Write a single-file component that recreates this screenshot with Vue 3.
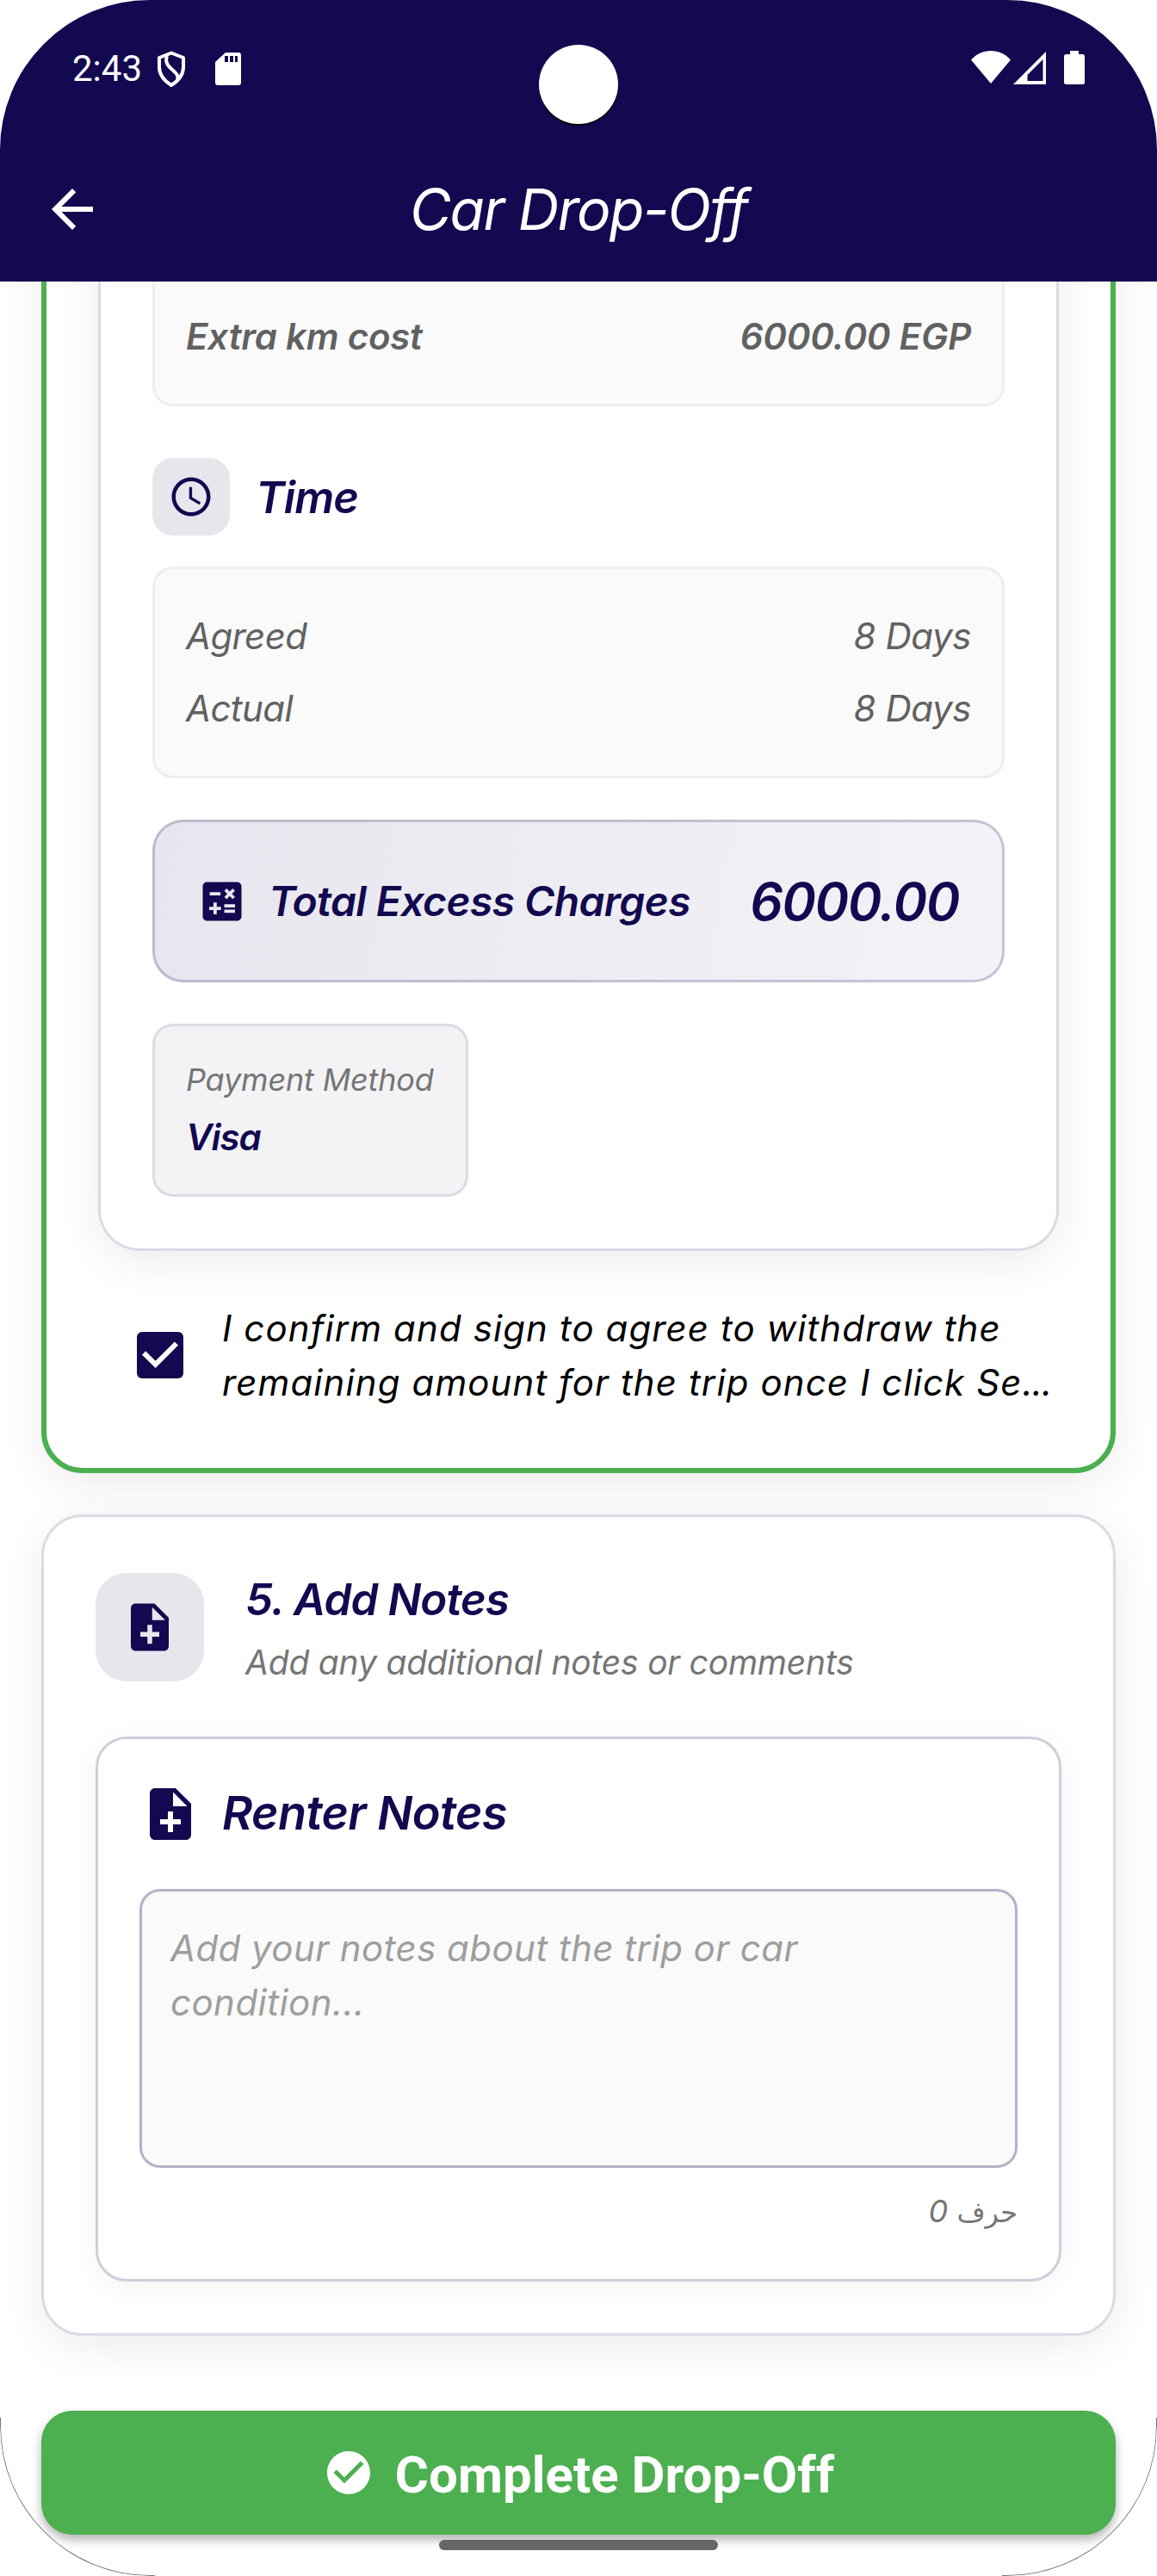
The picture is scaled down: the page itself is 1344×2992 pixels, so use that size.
<script setup>
const timeRows = [
  { label: 'Agreed', value: '8 Days' },
  { label: 'Actual', value: '8 Days' },
]
</script>

<template>
  <div class="stage">
    <div class="phone">
      <header class="header">
        <div class="status">
          <span class="clock">2:43</span>
          <svg class="shield" viewBox="0 0 34 42" width="34" height="42">
            <path d="M17 2.500 31 8v11c0 9-6 16-14 21C9 35 3 28 3 19V8z" fill="none" stroke="#fff" stroke-width="4" stroke-linejoin="round" />
            <path d="M12 6c-2 5-1 9 3 13 6 6 11 8 9 15" fill="none" stroke="#fff" stroke-width="4" />
          </svg>
          <svg class="sd" viewBox="0 0 30 38" width="30" height="38">
            <path fill="#fff" fill-rule="evenodd" d="M12 0h15a3 3 0 0 1 3 3v32a3 3 0 0 1-3 3H3a3 3 0 0 1-3-3V11zM11 4v7h4V4zm6 0v7h4V4zm6 0v7h3V4z" />
          </svg>
          <span class="grow"></span>
          <svg class="wifi" viewBox="0 0 46 38" width="46" height="38">
            <path fill="#fff" d="M0 10.500C6 4 14 0 23 0s17 4 23 10.500L23 38z" />
          </svg>
          <svg class="signal" viewBox="0 0 38 38" width="38" height="38">
            <path fill="#fff" fill-rule="evenodd" d="M38 0v38H0zM34.500 9 16.500 27v7h18z" />
          </svg>
          <svg class="battery" viewBox="0 0 24 39" width="24" height="39">
            <path fill="#fff" d="M7 0h10v4h4.500a2.500 2.500 0 0 1 2.500 2.500v30a2.500 2.500 0 0 1-2.500 2.500h-19A2.500 2.500 0 0 1 0 36.500v-30A2.500 2.500 0 0 1 2.500 4H7z" />
          </svg>
        </div>
        <div class="camera"></div>
        <div class="appbar">
          <svg class="back" viewBox="0 0 24 24" width="72" height="72">
            <path fill="#fff" d="M20 11H7.830l5.590-5.590L12 4l-8 8 8 8 1.410-1.410L7.830 13H20v-2z" />
          </svg>
          <h1>Car Drop-Off</h1>
        </div>
      </header>

      <main class="content">
        <section class="card active">
          <div class="invoice">
            <div class="box clipped">
              <div class="row strong"><span>Extra km cost</span><span>6000.00 EGP</span></div>
            </div>

            <div class="section-head">
              <div class="chip">
                <svg viewBox="0 0 24 24" width="54" height="54">
                  <path fill="#120950" d="M11.990 2C6.470 2 2 6.480 2 12s4.470 10 9.990 10C17.520 22 22 17.520 22 12S17.520 2 11.990 2zM12 20c-4.420 0-8-3.580-8-8s3.580-8 8-8 8 3.580 8 8-3.580 8-8 8zm.5-13H11v6l5.250 3.150.75-1.230-4.500-2.670z" />
                </svg>
              </div>
              <h2>Time</h2>
            </div>

            <div class="box">
              <div v-for="r in timeRows" :key="r.label" class="row">
                <span>{{ r.label }}</span><span class="value">{{ r.value }}</span>
              </div>
            </div>

            <div class="total">
              <svg viewBox="0 0 24 24" width="60" height="60">
                <path fill="#120950" d="M19 3H5c-1.100 0-2 .9-2 2v14c0 1.100.9 2 2 2h14c1.100 0 2-.9 2-2V5c0-1.100-.9-2-2-2zm-5.970 4.060L14.090 6l1.410 1.410L16.910 6l1.060 1.060-1.410 1.410 1.410 1.410-1.060 1.060-1.410-1.400-1.410 1.410-1.060-1.060 1.410-1.410-1.410-1.420zm-6.780.66h5v1.500h-5v-1.500zM11.500 16h-2v2H8v-2H6v-1.500h2v-2h1.500v2h2V16zm6.500 1.250h-5v-1.500h5v1.500zm0-2.500h-5v-1.500h5v1.500z" />
              </svg>
              <span class="total-label">Total Excess Charges</span>
              <span class="total-value">6000.00</span>
            </div>

            <div class="payment">
              <div class="pay-label">Payment Method</div>
              <div class="pay-value">Visa</div>
            </div>
          </div>

          <label class="confirm">
            <svg viewBox="0 0 54 54" width="54" height="54">
              <rect width="54" height="54" rx="6" fill="#120950" />
              <path d="M8.100 24.300 21.600 37.800 45.900 13.500" fill="none" stroke="#fff" stroke-width="6" />
            </svg>
            <p>I confirm and sign to agree to withdraw the<br>remaining amount for the trip once I click Se<span class="dots">...</span></p>
          </label>
        </section>

        <section class="card notes">
          <div class="notes-head">
            <div class="badge">
              <svg viewBox="0 0 24 24" width="66" height="66">
                <path fill="#120950" d="M14 2H6c-1.100 0-1.990.9-1.990 2L4 20c0 1.100.89 2 1.990 2H18c1.100 0 2-.9 2-2V8l-6-6zm2 14h-3v3h-2v-3H8v-2h3v-3h2v3h3v2zm-3-7V3.500L18.500 9H13z" />
              </svg>
            </div>
            <div>
              <h2 class="notes-title">5. Add Notes</h2>
              <p class="notes-sub">Add any additional notes or comments</p>
            </div>
          </div>

          <div class="renter">
            <div class="renter-head">
              <svg viewBox="0 0 24 24" width="72" height="72">
                <path fill="#120950" d="M14 2H6c-1.100 0-1.990.9-1.990 2L4 20c0 1.100.89 2 1.990 2H18c1.100 0 2-.9 2-2V8l-6-6zm2 14h-3v3h-2v-3H8v-2h3v-3h2v3h3v2zm-3-7V3.500L18.500 9H13z" />
              </svg>
              <h3>Renter Notes</h3>
            </div>
            <div class="field">Add your notes about the trip or car<br>condition...</div>
            <div class="counter">0 <span class="ar" dir="rtl">حرف</span></div>
          </div>
        </section>

        <button class="submit" type="button">
          <svg viewBox="0 0 24 24" width="60" height="60">
            <path fill="#fff" d="M12 2C6.480 2 2 6.480 2 12s4.480 10 10 10 10-4.480 10-10S17.520 2 12 2zm-2 15-5-5 1.410-1.410L10 14.170l7.590-7.590L19 8l-9 9z" />
          </svg>
          <span>Complete Drop-Off</span>
        </button>
      </main>
      <div class="home-bar"></div>
    </div>
  </div>
</template>

<style>
body { margin: 0; background: #fff; }
</style>

<style scoped>
.stage { width: 1344px; height: 2992px; background: #fff; }
.phone {
  position: relative;
  box-sizing: border-box;
  width: 1344px;
  height: 2992px;
  overflow: hidden;
  border-radius: 174px;
  background: #fff;
  font-family: Inter, "Liberation Sans", sans-serif;
  font-style: italic;
  color: #120950;
}
.phone::after {
  content: "";
  position: absolute;
  left: 0;
  right: 0;
  bottom: 0;
  height: 184px;
  border: 1px solid #777;
  border-top: 0;
  border-radius: 0 0 174px 174px;
  box-sizing: border-box;
  clip-path: polygon(0 0, 180px 0, 180px 100%, 1164px 100%, 1164px 0, 100% 0, 100% 100%, 0 100%);
}
h1, h2, h3, p { margin: 0; }
svg { display: block; flex: none; }

.header {
  position: relative;
  z-index: 2;
  height: 327px;
  background: #120950;
  color: #fff;
}
.status {
  display: flex;
  box-sizing: border-box;
  height: 159px;
  padding: 59px 84px 0 84px;
}
.clock {
  width: 98px;
  font: normal 400 42px/50px Roboto, sans-serif;
  margin-top: -4px;
}
.sd { margin: 2px 0 0 34px; }
.grow { flex: 1; }
.wifi { margin-right: 3px; }
.signal { margin: 1px 21px 0 0; }
.camera {
  position: absolute;
  left: 626px;
  top: 52px;
  width: 92px;
  height: 92px;
  border-radius: 50%;
  background: #fff;
  box-shadow: 0 2px 0 #000;
}
.appbar {
  position: relative;
  display: flex;
  align-items: center;
  height: 168px;
  padding-left: 48px;
}
h1 {
  position: absolute;
  left: 0;
  right: 0;
  text-align: center;
  font-size: 66px;
  font-weight: 400;
  line-height: 168px;
  letter-spacing: -1.6px;
}

.content { margin-top: -160px; padding: 0 48px; }
.card {
  box-sizing: border-box;
  border: 3px solid #dbdae5;
  border-radius: 48px;
  background: #fff;
  box-shadow: 0 12px 52px rgba(0, 0, 0, 0.08);
}
.active {
  border: 6px solid #4caf50;
  height: 1544px;
  padding: 0 60px;
}
.invoice {
  box-sizing: border-box;
  height: 1280px;
  border: 3px solid #dbdae5;
  border-top: 0;
  border-radius: 0 0 48px 48px;
  padding: 0 60px;
  box-shadow: 0 12px 52px rgba(0, 0, 0, 0.08);
}
.box {
  box-sizing: border-box;
  border: 3px solid #eee;
  border-radius: 24px;
  background: #fafafa;
  padding: 36px;
}
.clipped { height: 299px; display: flex; flex-direction: column; justify-content: flex-end; }
.row {
  display: flex;
  justify-content: space-between;
  font-size: 42px;
  line-height: 84px;
  letter-spacing: -0.6px;
  color: #616161;
}
.value { letter-spacing: -0.4px; }
.strong { font-weight: 600; letter-spacing: -0.25px; }
.section-head { display: flex; align-items: center; gap: 30px; margin: 60px 0 36px; }
.chip {
  display: flex;
  align-items: center;
  justify-content: center;
  width: 90px;
  height: 90px;
  border-radius: 24px;
  background: #e7e6ed;
}
h2 { font-size: 51px; font-weight: 600; line-height: 71px; letter-spacing: -0.9px; }
.total {
  display: flex;
  align-items: center;
  box-sizing: border-box;
  height: 189px;
  margin: 48px 0;
  padding: 0 50px 0 48px;
  border: 3px solid rgba(18, 9, 80, 0.2);
  border-radius: 36px;
  background: linear-gradient(100deg, #e7e6ee, #f3f3f7) border-box;
}
.total-label { margin-left: 24px; font-size: 48px; font-weight: 600; letter-spacing: -0.6px; }
.total-value { margin-left: auto; font-size: 60px; font-weight: 600; letter-spacing: -1.300px; }
.payment {
  box-sizing: border-box;
  width: 367px;
  height: 201px;
  padding: 36px;
  border: 3px solid #dcdbe5;
  border-radius: 24px;
  background: #f3f3f6;
  white-space: nowrap;
}
.pay-label { font-size: 36px; line-height: 52px; letter-spacing: -0.18px; color: #757575; }
.pay-value { margin-top: 9px; font-size: 42px; font-weight: 600; line-height: 63px; letter-spacing: -1px; }
.confirm { display: flex; align-items: center; margin: 58px 0 0 45px; }
.confirm p {
  margin-left: 45px;
  font-size: 42px;
  line-height: 63px;
  letter-spacing: 1.1px;
  color: #000;
  white-space: nowrap;
}
.confirm .dots { letter-spacing: -0.8px; }
.notes { height: 954px; margin-top: 48px; padding: 60px; }
.notes-head { display: flex; height: 138px; }
.badge {
  display: flex;
  align-items: center;
  justify-content: center;
  width: 126px;
  height: 126px;
  margin: 5px 48px 0 0;
  border-radius: 36px;
  background: #e7e6ed;
}
.notes-sub { margin-top: 8px; font-size: 39px; line-height: 59px; letter-spacing: -0.2px; color: #757575; }
.renter {
  box-sizing: border-box;
  height: 633px;
  margin-top: 57px;
  padding: 48px;
  border: 3px solid #d0cedc;
  border-radius: 36px;
  background: #fff;
  box-shadow: 0 6px 36px rgba(0, 0, 0, 0.05);
}
.renter-head { display: flex; align-items: center; height: 78px; }
h3 { margin-left: 24px; padding-bottom: 3px; font-size: 54px; font-weight: 600; line-height: 70px; letter-spacing: -0.6px; }
.field {
  box-sizing: border-box;
  height: 324px;
  margin-top: 48px;
  padding: 34px 33px;
  border: 3px solid #b4b2c9;
  border-radius: 24px;
  background: #fafafa;
  font-size: 42px;
  line-height: 63px;
  letter-spacing: 0.45px;
  color: #9e9e9e;
}
.counter {
  margin-top: 23px;
  font-size: 36px;
  line-height: 54px;
  text-align: right;
  color: #757575;
}
.ar { font-family: "Noto Sans", "DejaVu Sans", sans-serif; font-size: 32px; font-style: normal; line-height: 1; }
.submit {
  display: flex;
  align-items: center;
  justify-content: center;
  gap: 24px;
  width: 100%;
  height: 144px;
  margin-top: 87px;
  padding: 0;
  border: 0;
  border-radius: 36px;
  background: #4caf50;
  color: #fff;
  font: normal 700 60px/70px Roboto, sans-serif;
  box-shadow: 0 6px 12px rgba(0, 0, 0, 0.3);
}
.submit span { padding-top: 6px; }
.home-bar {
  width: 324px;
  height: 12px;
  margin: 6px auto 0;
  border-radius: 6px;
  background: #666;
}
</style>
